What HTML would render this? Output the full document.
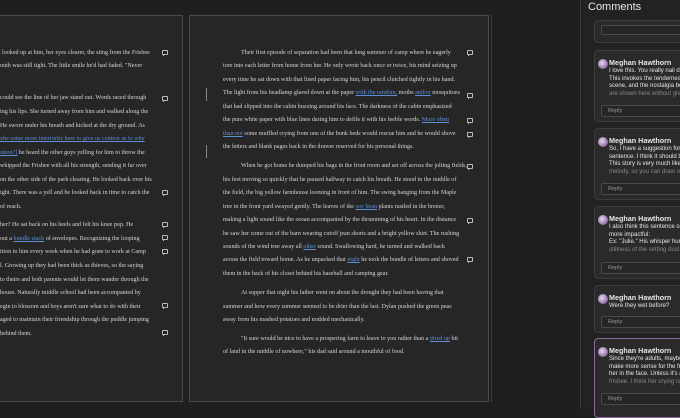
<!DOCTYPE html>
<html><head><meta charset="utf-8"><style>
*{margin:0;padding:0;box-sizing:border-box}
body{width:680px;height:409px;background:#1f1f1f;position:relative;overflow:hidden;font-family:"Liberation Serif",serif}
.page{position:absolute;background:#262626;border:1.5px solid #4a4a4a}
.l{position:absolute;font-size:6.1px;color:#d6d6d6;white-space:nowrap;line-height:8px}
.b{color:#5b8fd6;text-decoration:underline}
.ic{position:absolute;width:6px;height:5px;border:1px solid #bbb;border-radius:1px}
.ic:after{content:"";position:absolute;left:0;top:3px;width:2px;height:2px;border-left:1px solid #bbb}
.bar{position:absolute;width:1px;background:#888}
.cm{position:absolute;left:594px;width:100px;background:#2a2a2a;border:1px solid #3d3d3d;border-radius:4px;font-family:"Liberation Sans",sans-serif;color:#e6e6e6;overflow:hidden}
.av{position:absolute;left:3px;top:8px;width:10px;height:10px;border-radius:50%;background:radial-gradient(circle at 40% 40%,#e8d8ee,#9a7cae 60%,#5a4868)}
.nm{position:absolute;left:14px;top:7px;font-size:7.2px;font-weight:bold}
.tx{position:absolute;left:14px;top:17px;font-size:6px;line-height:7.5px;white-space:nowrap}
.rp{position:absolute;left:6px;width:94px;height:12px;border:1px solid #4a4a4a;border-radius:2px;background:#262626;font-size:5.6px;color:#999;padding:2px 6px}
</style></head><body>
<div class="page" style="left:-20px;top:15px;width:203px;height:387px"></div>
<div class="page" style="left:189px;top:15px;width:300px;height:387px"></div>
<div style="position:absolute;left:491px;top:15px;width:1px;height:387px;background:#3a3a3a"></div>
<div style="position:absolute;left:580px;top:0;width:100px;height:409px;background:#222;border-left:1px solid #3a3a3a"></div>
<div style="position:absolute;left:588px;top:1px;font-family:'Liberation Sans',sans-serif;font-size:11px;color:#e8e8e8">Comments</div>

<div class="l" style="left:2px;top:49px">looked up at him, her eyes clearer, the sting from the Frisbee</div>
<div class="l" style="left:0px;top:62px">outh was still tight. The little smile he'd had faded. "Never</div>
<div class="l" style="left:0px;top:94px">could see the line of her jaw stand out. Words raced through</div>
<div class="l" style="left:0px;top:108px">ing his lips. She turned away from him and walked along the</div>
<div class="l" style="left:0px;top:122px">He swore under his breath and kicked at the dry ground. As</div>
<div class="l b" style="left:0px;top:135px">ybe some more interiority here to give us context as to why</div>
<div class="l" style="left:0px;top:149px"><span class="b">ution?]</span> he heard the other guys yelling for him to throw the</div>
<div class="l" style="left:0px;top:162px">whipped the Frisbee with all his strength, sending it far over</div>
<div class="l" style="left:0px;top:176px">on the other side of the park clearing. He looked back over his</div>
<div class="l" style="left:0px;top:189px">ight. There was a yell and he looked back in time to catch the</div>
<div class="l" style="left:0px;top:203px">of reach.</div>
<div class="l" style="left:0px;top:221px">her? He sat back on his heels and felt his knee pop. He</div>
<div class="l" style="left:0px;top:235px">out a <span class="b">bundle stack</span> of envelopes. Recognizing the looping</div>
<div class="l" style="left:0px;top:248px">ition to him every week when he had gone to work at Camp</div>
<div class="l" style="left:0px;top:262px">l. Growing up they had been thick as thieves, so the saying</div>
<div class="l" style="left:0px;top:276px">to theirs and both parents would let them wander through the</div>
<div class="l" style="left:0px;top:289px">house. Naturally middle school had been accompanied by</div>
<div class="l" style="left:0px;top:303px">egin to blossom and boys aren't sure what to do with their</div>
<div class="l" style="left:0px;top:316px">aged to maintain their friendship through the puddle jumping</div>
<div class="l" style="left:0px;top:330px">behind them.</div>

<div class="ic" style="left:162px;top:50px"></div><div class="ic" style="left:162px;top:96px"></div>
<div class="ic" style="left:162px;top:190px"></div><div class="ic" style="left:162px;top:222px"></div>
<div class="ic" style="left:162px;top:235px"></div><div class="ic" style="left:162px;top:249px"></div>
<div class="ic" style="left:162px;top:303px"></div><div class="ic" style="left:162px;top:330px"></div>

<div class="bar" style="left:206px;top:88px;height:13px"></div>
<div class="bar" style="left:206px;top:145px;height:13px"></div>

<div class="l" style="left:241px;top:49px">Their first episode of separation had been that long summer of camp where he eagerly</div>
<div class="l" style="left:223px;top:62px">tore into each letter from home from her. He only wrote back once or twice, his mind seizing up</div>
<div class="l" style="left:223px;top:76px">every time he sat down with that lined paper facing him, his pencil clutched tightly in his hand.</div>
<div class="l" style="left:223px;top:89px">The light from his headlamp glared down at the paper <span class="b">with the random,</span> moths <span class="b">and/or</span> mosquitoes</div>
<div class="l" style="left:223px;top:103px">that had slipped into the cabin buzzing around his face. The darkness of the cabin emphasized</div>
<div class="l" style="left:223px;top:116px">the pure white paper with blue lines daring him to defile it with his feeble words. <span class="b">More often</span></div>
<div class="l" style="left:223px;top:130px"><span class="b">than not</span> some muffled crying from one of the bunk beds would rescue him and he would shove</div>
<div class="l" style="left:223px;top:143px">the letters and blank pages back in the drawer reserved for his personal things.</div>
<div class="l" style="left:241px;top:162px">When he got home he dumped his bags in the front room and set off across the jolting fields,</div>
<div class="l" style="left:223px;top:176px">his feet moving so quickly that he paused halfway to catch his breath. He stood in the middle of</div>
<div class="l" style="left:223px;top:189px">the field, the big yellow farmhouse looming in front of him. The swing hanging from the Maple</div>
<div class="l" style="left:223px;top:203px">tree in the front yard swayed gently. The leaves of the <span class="b">soy bean</span> plants rustled in the breeze,</div>
<div class="l" style="left:223px;top:216px">making a light sound like the ocean accompanied by the thrumming of his heart. In the distance</div>
<div class="l" style="left:223px;top:230px">he saw her come out of the barn wearing cutoff jean shorts and a bright yellow shirt. The rushing</div>
<div class="l" style="left:223px;top:243px">sounds of the wind tree away all <span class="b">other</span> sound. Swallowing hard, he turned and walked back</div>
<div class="l" style="left:223px;top:256px">across the field toward home. As he unpacked that <span class="b">night</span> he took the bundle of letters and shoved</div>
<div class="l" style="left:223px;top:270px">them in the back of his closet behind his baseball and camping gear.</div>
<div class="l" style="left:241px;top:289px">At supper that night his father went on about the drought they had been having that</div>
<div class="l" style="left:223px;top:303px">summer and how every summer seemed to be drier than the last. Dylan pushed the green peas</div>
<div class="l" style="left:223px;top:316px">away from his mashed potatoes and nodded mechanically.</div>
<div class="l" style="left:241px;top:335px">"It sure would be nice to have a prospering farm to leave to you rather than a <span class="b">dried up</span> bit</div>
<div class="l" style="left:223px;top:348px">of land in the middle of nowhere," his dad said around a mouthful of food.</div>

<div class="ic" style="left:467px;top:50px"></div><div class="ic" style="left:467px;top:93px"></div>
<div class="ic" style="left:467px;top:118px"></div><div class="ic" style="left:467px;top:132px"></div>
<div class="ic" style="left:467px;top:164px"></div><div class="ic" style="left:467px;top:218px"></div>
<div class="ic" style="left:467px;top:257px"></div>

<div class="cm" style="top:20px;height:23px"><div class="rp" style="top:4px;height:10px"></div></div>
<div class="cm" style="top:50px;height:72px"><div class="av"></div><div class="nm">Meghan Hawthorn</div>
<div class="tx">I love this. You really nail de<br>This invokes the tenderness<br>scene, and the nostalgia beh<br><span style="color:#888">are shown here without givi</span></div>
<div class="rp" style="top:54px">Reply</div></div>
<div class="cm" style="top:128px;height:72px"><div class="av"></div><div class="nm">Meghan Hawthorn</div>
<div class="tx">So, I have a suggestion for th<br>sentence. I think it should be<br>This story is very much like a<br><span style="color:#888">melody, so you can draw out</span></div>
<div class="rp" style="top:54px">Reply</div></div>
<div class="cm" style="top:206px;height:73px"><div class="av"></div><div class="nm">Meghan Hawthorn</div>
<div class="tx">I also think this sentence cou<br>more impactful:<br>Ex: "Julie." His whisper hung<br><span style="color:#888">stillness of the setting dust s</span></div>
<div class="rp" style="top:55px">Reply</div></div>
<div class="cm" style="top:285px;height:48px"><div class="av"></div><div class="nm">Meghan Hawthorn</div>
<div class="tx">Were they wet before?</div>
<div class="rp" style="top:30px">Reply</div></div>
<div class="cm" style="top:338px;height:80px;border-color:#8a6a9e"><div class="av"></div><div class="nm">Meghan Hawthorn</div>
<div class="tx">Since they're adults, maybe<br>make more sense for the fris<br>her in the face. Unless it's a g<br><span style="color:#888">frisbee. I think her crying is</span></div>
<div class="rp" style="top:54px">Reply</div></div>
</body></html>
